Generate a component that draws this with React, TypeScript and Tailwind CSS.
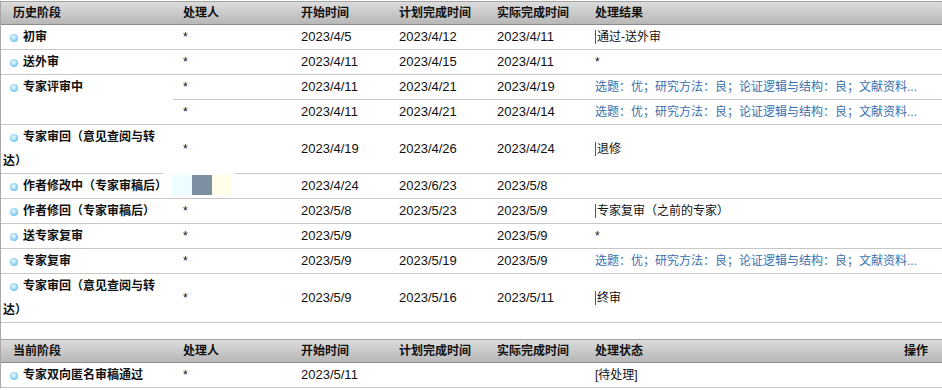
import React from "react";

type Row = {
  stage: string;
  handler: string;
  start: string;
  plan: string;
  actual: string;
  result: string;
  bar?: boolean;
  blue?: boolean;
  tall?: boolean;
  redact?: boolean;
};

const BLUE = "选题：优；研究方法：良；论证逻辑与结构：良；文献资料...";

const Bullet = () => (
  <span className="inline-block w-[8px] h-[8px] rounded-full ml-[7px] mr-[5px] align-[-0.5px] bg-[radial-gradient(circle_at_45%_40%,#f4fcff_0%,#a6dcf7_40%,#48ade6_100%)]" />
);

const Bar = () => <span className="inline-block w-px h-[14px] bg-[#555] mr-[1px] align-[-2px]" />;

function HeaderRow({ first, last }: { first: string; last: string }) {
  const cls =
    "h-[24px] border-t border-b border-t-[#a3a3a3] border-b-[#8c8c8c] bg-linear-to-b from-[#dcdcdc] to-[#b7b7b7] flex items-center font-bold text-[12px] text-[#111]";
  return (
    <>
      <div className={`${cls} pl-[12px]`}>{first}</div>
      <div className={`${cls} pl-[10px]`}>处理人</div>
      <div className={`${cls} pl-[10px]`}>开始时间</div>
      <div className={`${cls} pl-[10px]`}>计划完成时间</div>
      <div className={`${cls} pl-[10px]`}>实际完成时间</div>
      <div className={`${cls} pl-[10px] pr-[14px] justify-between`}>
        <span>{last}</span>
        {last === "处理状态" ? <span>操作</span> : null}
      </div>
    </>
  );
}

function DataCells({ r, noStage }: { r: Row; noStage?: boolean }) {
  const h = r.tall ? "h-[49px]" : "h-[25px]";
  const base = `${h} border-b border-[#c6c6c6] flex items-center pl-[10px]`;
  return (
    <>
      {noStage ? null : (
        <div className={`${h} border-b border-[#c6c6c6] pl-[2px] pr-[2px] text-[12px] font-bold leading-[24px] text-[#111]`}>
          <Bullet />
          {r.stage}
        </div>
      )}
      <div className={`${base} text-[12px] text-[#111] relative`}>
        {r.redact ? (
          <div className="absolute left-[-10px] top-[-1px] w-[72px] h-[22px] bg-white flex pl-[9px] pt-[2px]">
            <div className="w-[20px] h-[20px] bg-[#ecfeff]" />
            <div className="w-[20px] h-[20px] bg-[#7b8fa0]" />
            <div className="w-[20px] h-[20px] bg-[#fdfdea]" />
          </div>
        ) : (
          r.handler
        )}
      </div>
      <div className={`${base} text-[13px] text-[#111]`}>{r.start}</div>
      <div className={`${base} text-[13px] text-[#111]`}>{r.plan}</div>
      <div className={`${base} text-[13px] text-[#111]`}>{r.actual}</div>
      <div className={`${base} text-[12px] ${r.blue ? "text-[#3a70ad]" : "text-[#111]"} whitespace-nowrap overflow-hidden`}>
        {r.bar ? <Bar /> : null}
        {r.result}
      </div>
    </>
  );
}

export default function App() {
  const rows: Row[] = [
    { stage: "初审", handler: "*", start: "2023/4/5", plan: "2023/4/12", actual: "2023/4/11", result: "通过-送外审", bar: true },
    { stage: "送外审", handler: "*", start: "2023/4/11", plan: "2023/4/15", actual: "2023/4/11", result: "*" },
  ];
  const rowsB: Row[] = [
    { stage: "专家审回（意见查阅与转达）", handler: "*", start: "2023/4/19", plan: "2023/4/26", actual: "2023/4/24", result: "退修", bar: true, tall: true },
    { stage: "作者修改中（专家审稿后）", handler: "", start: "2023/4/24", plan: "2023/6/23", actual: "2023/5/8", result: "", redact: true },
    { stage: "作者修回（专家审稿后）", handler: "*", start: "2023/5/8", plan: "2023/5/23", actual: "2023/5/9", result: "专家复审（之前的专家）", bar: true },
    { stage: "送专家复审", handler: "*", start: "2023/5/9", plan: "", actual: "2023/5/9", result: "*" },
    { stage: "专家复审", handler: "*", start: "2023/5/9", plan: "2023/5/19", actual: "2023/5/9", result: BLUE, blue: true },
    { stage: "专家审回（意见查阅与转达）", handler: "*", start: "2023/5/9", plan: "2023/5/16", actual: "2023/5/11", result: "终审", bar: true, tall: true },
  ];
  const r3a: Row = { stage: "专家评审中", handler: "*", start: "2023/4/11", plan: "2023/4/21", actual: "2023/4/19", result: BLUE, blue: true };
  const r3b: Row = { stage: "", handler: "*", start: "2023/4/11", plan: "2023/4/21", actual: "2023/4/14", result: BLUE, blue: true };
  const cur: Row = { stage: "专家双向匿名审稿通过", handler: "*", start: "2023/5/11", plan: "", actual: "", result: "[待处理]" };

  return (
    <div className="w-[942px] h-[390px] bg-white pt-px font-['Liberation_Sans','Noto_Sans_CJK_SC',sans-serif] overflow-hidden">
      <div className="grid grid-cols-[172px_118px_98px_98px_98px_1fr] border-l border-[#a8a8a8]">
        <HeaderRow first="历史阶段" last="处理结果" />
        {rows.map((r, i) => (
          <DataCells key={i} r={r} />
        ))}
        <div className="row-span-2 h-[50px] border-b border-[#c6c6c6] pl-[2px] text-[12px] font-bold leading-[24px] text-[#111]">
          <Bullet />
          {r3a.stage}
        </div>
        <DataCells r={r3a} noStage />
        <DataCells r={r3b} noStage />
        {rowsB.map((r, i) => (
          <DataCells key={"b" + i} r={r} />
        ))}
        <div className="col-span-6 h-[16px]" />
        <HeaderRow first="当前阶段" last="处理状态" />
        <DataCells r={cur} />
      </div>
    </div>
  );
}
